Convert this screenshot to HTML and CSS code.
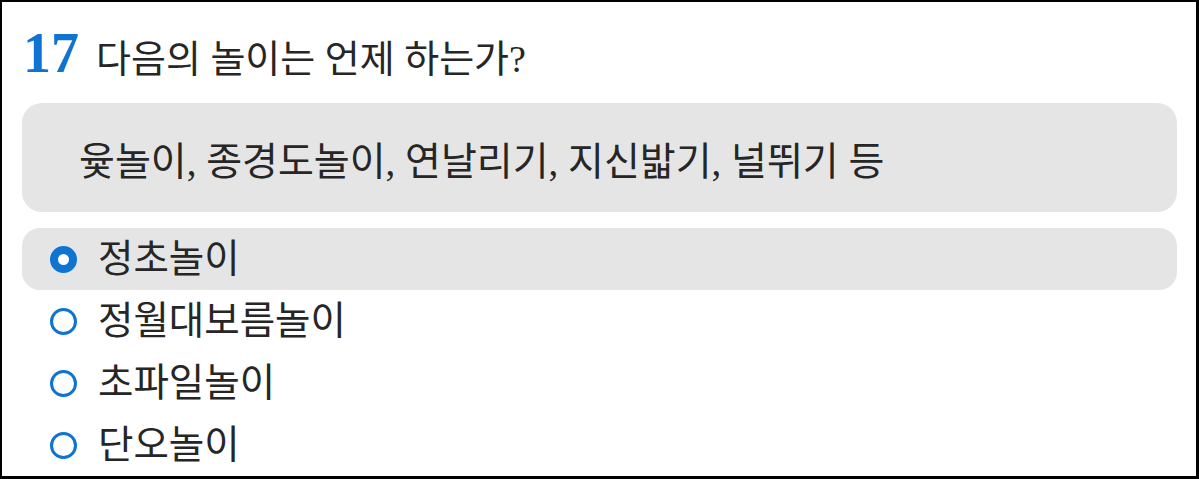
FILE: index.html
```html
<!DOCTYPE html>
<html lang="ko">
<head>
<meta charset="utf-8">
<link rel="stylesheet" href="styles.css">
</head>
<body>
<div class="frame">
  <div class="heading">
    <span class="num">17</span>
    <span class="question">다음의 놀이는 언제 하는가?</span>
  </div>
  <div class="passage">윷놀이, 종경도놀이, 연날리기, 지신밟기, 널뛰기 등</div>
  <ul class="options">
    <li class="option selected"><span class="radio"></span><span class="label">정초놀이</span></li>
    <li class="option"><span class="radio"></span><span class="label">정월대보름놀이</span></li>
    <li class="option"><span class="radio"></span><span class="label">초파일놀이</span></li>
    <li class="option"><span class="radio"></span><span class="label">단오놀이</span></li>
  </ul>
</div>
</body>
</html>
```

FILE: styles.css
```css
html, body {
  margin: 0;
  padding: 0;
  background: #fff;
}

.frame {
  width: 1199px;
  height: 479px;
  box-sizing: border-box;
  border-style: solid;
  border-color: #000;
  border-width: 2px 3px 3px 2px;
  padding: 0 19px 0 20px;
  overflow: hidden;
  font-family: "Liberation Serif", "Noto Sans CJK KR", serif;
  color: #262626;
}

.heading {
  display: flex;
  align-items: baseline;
  height: 101px;
  box-sizing: border-box;
  padding: 23px 0 0 1px;
}

.num {
  font-family: "Liberation Serif", serif;
  font-weight: bold;
  font-size: 56px;
  line-height: 1;
  color: #0f73d2;
  margin-right: 17px;
}

.question {
  font-size: 38px;
  line-height: 1;
}

.passage {
  height: 109px;
  box-sizing: border-box;
  background: #e5e5e5;
  border-radius: 20px;
  display: flex;
  align-items: center;
  padding-left: 57px;
  font-size: 39px;
}

.options {
  list-style: none;
  margin: 16px 0 0;
  padding: 0;
}

.option {
  height: 62px;
  display: flex;
  align-items: center;
  padding-left: 28px;
  border-radius: 18px;
  font-size: 38.5px;
}

.option.selected {
  background: #e5e5e5;
}

.radio {
  width: 27px;
  height: 27px;
  box-sizing: border-box;
  border-radius: 50%;
  border: 3px solid #0f73d2;
  background: #fff;
  flex: none;
  margin-right: 21px;
}

.option.selected .radio {
  border-width: 8px;
}

.label {
  line-height: 1;
}
```
